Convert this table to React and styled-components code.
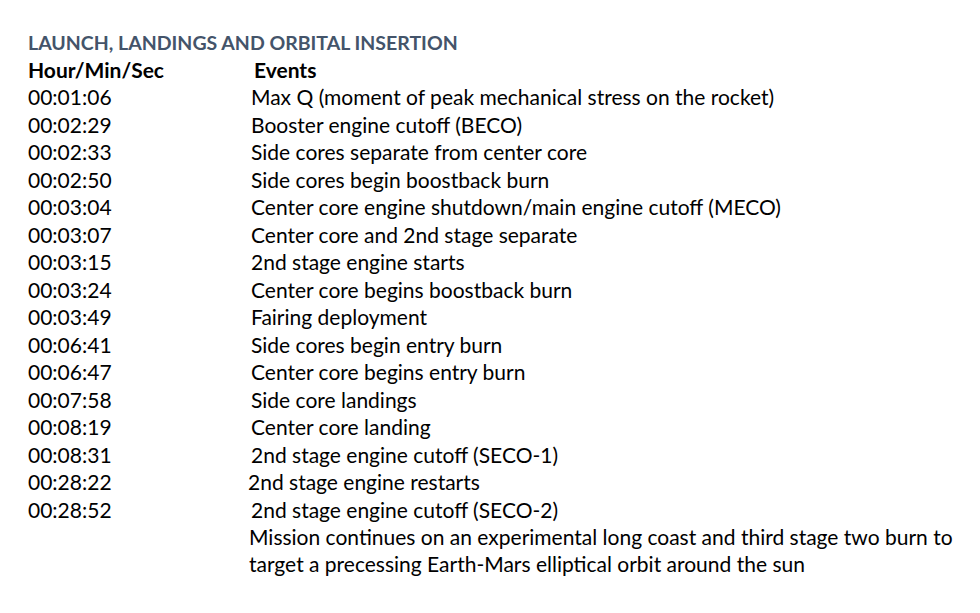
import styled, { createGlobalStyle } from 'styled-components';

const GlobalStyle = createGlobalStyle`
  html, body { margin: 0; padding: 0; background: #fff; }
  body { font-family: Lato, "Open Sans", sans-serif; color: #000; }
`;

const Page = styled.div`
  width: 980px;
  height: 613px;
  padding: 30px 0 0 28px;
  box-sizing: border-box;
  overflow: hidden;
`;

const Title = styled.h2`
  margin: 0;
  font-size: 19.5px;
  line-height: 26px;
  font-weight: 700;
  color: #44546a;
`;

const Table = styled.div`
  display: grid;
  grid-template-columns: 223px 1fr;
  font-size: 21px;
  line-height: 27.47px;
`;

const HeadCell = styled.div`
  font-weight: 700;
  padding-left: ${({ $shift }) => $shift || 0}px;
`;

const Time = styled.div``;

const Event = styled.div`
  margin-left: ${({ $shift }) => $shift || 0}px;
`;

const rows = [
  ['00:01:06', 'Max Q (moment of peak mechanical stress on the rocket)'],
  ['00:02:29', 'Booster engine cutoff (BECO)'],
  ['00:02:33', 'Side cores separate from center core'],
  ['00:02:50', 'Side cores begin boostback burn'],
  ['00:03:04', 'Center core engine shutdown/main engine cutoff (MECO)'],
  ['00:03:07', 'Center core and 2nd stage separate'],
  ['00:03:15', '2nd stage engine starts'],
  ['00:03:24', 'Center core begins boostback burn'],
  ['00:03:49', 'Fairing deployment'],
  ['00:06:41', 'Side cores begin entry burn'],
  ['00:06:47', 'Center core begins entry burn'],
  ['00:07:58', 'Side core landings'],
  ['00:08:19', 'Center core landing'],
  ['00:08:31', '2nd stage engine cutoff (SECO-1)'],
  ['00:28:22', '2nd stage engine restarts', -3],
  ['00:28:52', '2nd stage engine cutoff (SECO-2)'],
  ['', 'Mission continues on an experimental long coast and third stage two burn to', -2],
  ['', 'target a precessing Earth-Mars elliptical orbit around the sun', -2],
];

export default function App() {
  return (
    <Page>
      <GlobalStyle />
      <Title>LAUNCH, LANDINGS AND ORBITAL INSERTION</Title>
      <Table>
        <HeadCell>Hour/Min/Sec</HeadCell>
        <HeadCell $shift={3}>Events</HeadCell>
        {rows.map(([time, text, shift], i) => (
          <>
            <Time key={'t' + i}>{time}</Time>
            <Event key={'e' + i} $shift={shift}>{text}</Event>
          </>
        ))}
      </Table>
    </Page>
  );
}
